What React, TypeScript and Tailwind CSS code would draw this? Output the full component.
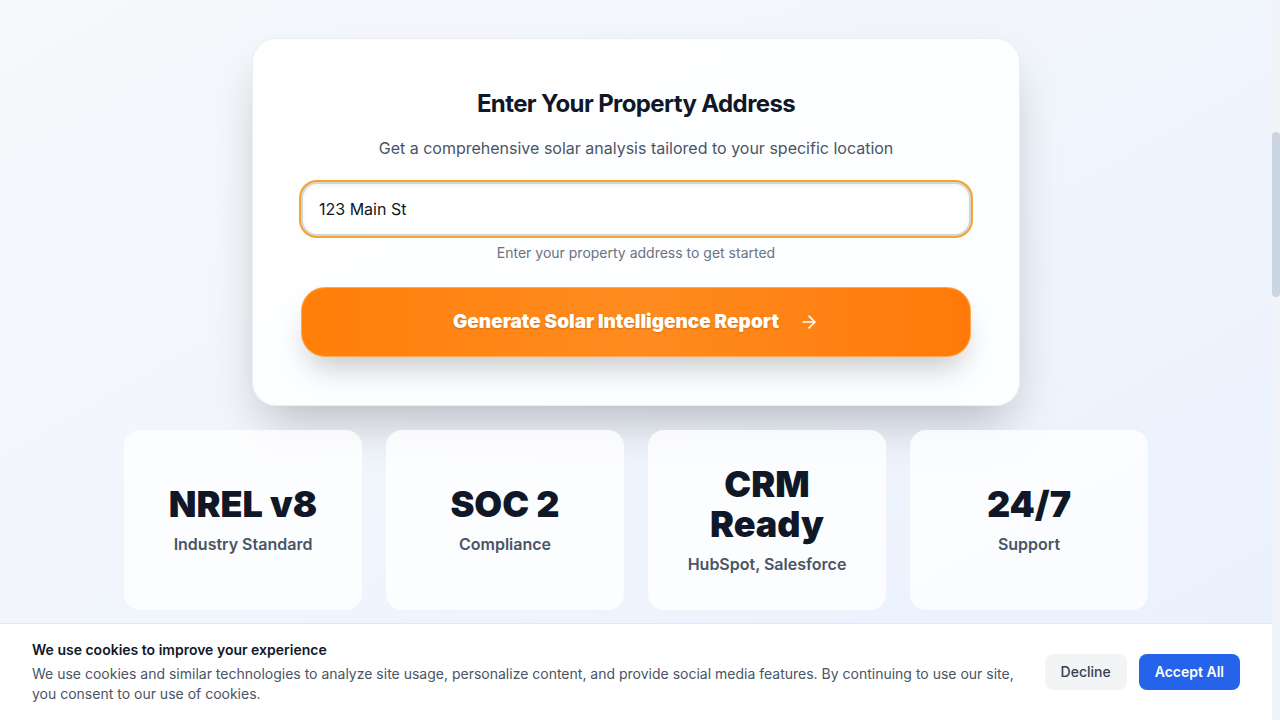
import React from "react";
import { ArrowRight } from "lucide-react";

const stats = [
  { big: "NREL v8", small: "Industry Standard" },
  { big: "SOC 2", small: "Compliance" },
  { big: "CRM Ready", small: "HubSpot, Salesforce" },
  { big: "24/7", small: "Support" },
];

export default function App() {
  return (
    <div className="flex h-screen w-full overflow-hidden font-['Inter','Noto_Sans',sans-serif] text-gray-900">
      {/* Page area */}
      <div className="relative flex-1 overflow-hidden bg-gradient-to-br from-[#f6f8fb] via-[#f1f5fc] to-[#e9f0fe]">
        <section className="px-8 pt-[38px]">
          <div className="mx-auto max-w-3xl rounded-3xl border border-gray-200/70 bg-white/85 px-12 pb-12 pt-[49px] text-center shadow-2xl">
            <h2 className="mb-4 text-2xl font-bold tracking-tight text-gray-900">
              Enter Your Property Address
            </h2>
            <p className="mb-[22px] text-base text-gray-600">
              Get a comprehensive solar analysis tailored to your specific location
            </p>
            <input
              type="text"
              defaultValue="123 Main St"
              className="h-[54px] w-full rounded-2xl border-2 border-gray-300 bg-white px-4 text-base text-gray-900 shadow-inner outline-none ring-2 ring-[#f6a52c]"
            />
            <p className="mt-[7px] text-sm text-gray-500">
              Enter your property address to get started
            </p>
            <button className="mt-6 flex w-full items-center justify-center gap-5 rounded-3xl border border-orange-300/70 bg-gradient-to-r from-[#ff7f08] via-[#ff8b1e] to-[#ff7a08] py-5 text-[19px] font-black leading-7 text-white shadow-[0_18px_30px_-8px_rgba(0,0,0,0.22)] [text-shadow:0_1px_2px_rgba(0,0,0,0.18)]">
              <span>Generate Solar Intelligence Report</span>
              <ArrowRight className="h-5 w-5" strokeWidth={2} />
            </button>
          </div>

          <div className="mx-auto mt-6 grid max-w-5xl grid-cols-4 gap-6">
            {stats.map((s) => (
              <div
                key={s.big}
                className="flex flex-col items-center justify-center rounded-2xl bg-white/80 px-8 py-[34px] text-center"
              >
                <div className="mx-auto max-w-[150px] text-4xl font-black leading-10 text-gray-900">
                  {s.big}
                </div>
                <div className="mt-2 text-base font-semibold text-gray-600">{s.small}</div>
              </div>
            ))}
          </div>
        </section>

        {/* Cookie banner */}
        <div className="absolute inset-x-0 bottom-0 z-50 border-t border-gray-200 bg-white px-8 py-4">
          <div className="flex items-center justify-between gap-6">
            <div className="flex-1">
              <p className="text-sm font-semibold text-gray-900">We use cookies to improve your experience</p>
              <p className="mt-1 text-sm text-gray-600">
                We use cookies and similar technologies to analyze site usage, personalize content, and provide social media features. By continuing to use our site, you consent to our use of cookies.
              </p>
            </div>
            <div className="flex shrink-0 gap-3">
              <button className="rounded-lg bg-gray-100 px-4 py-2 text-sm font-medium text-gray-700">Decline</button>
              <button className="rounded-lg bg-[#2563eb] px-4 py-2 text-sm font-semibold text-white">Accept All</button>
            </div>
          </div>
        </div>
      </div>

      {/* Scrollbar */}
      <div className="w-2 shrink-0 bg-[#f1f5f9]">
        <div className="mt-[132px] h-[165px] rounded-full bg-[#cbd5e1]" />
      </div>
    </div>
  );
}
